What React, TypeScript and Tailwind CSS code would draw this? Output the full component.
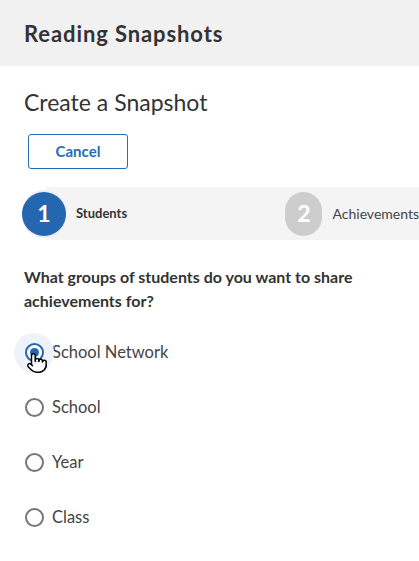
import { Pointer } from 'lucide-react';

const options = ['School Network', 'School', 'Year', 'Class'];

const App = () => {
  const font = { fontFamily: 'Lato, "Noto Sans", sans-serif' };

  return (
    <div className="w-[419px] h-[561px] overflow-hidden bg-white text-[#333]" style={font}>
      {/* Page header */}
      <div className="h-[66px] bg-[#f1f1f1] px-6 flex items-center">
        <h1 className="text-[22px] font-bold tracking-[0.9px] text-[#333]">Reading Snapshots</h1>
      </div>

      <div className="pt-[22px]">
        <h2 className="px-6 text-[23px] leading-[28px] text-[#333]">Create a Snapshot</h2>

        <button className="ml-[28px] mt-[18px] w-[100px] h-[35px] rounded-[3px] border border-[#2a6cb4] text-[#2a6cb4] text-[15px] font-bold">
          Cancel
        </button>

        {/* Stepper */}
        <div className="relative mt-[18px] h-[53px]">
          <div className="absolute left-[46px] right-0 top-0 bottom-0 bg-[#f4f4f4]" />
          <div className="relative flex items-center h-full pl-[22px]">
            <div className="w-[48px] h-[48px] rounded-full bg-[#ececec] flex items-center justify-center">
              <div className="w-[44px] h-[44px] rounded-full bg-[#2566b0] text-white text-[23px] font-bold flex items-center justify-center">
                1
              </div>
            </div>
            <span className="ml-[10px] text-[13px] font-bold text-[#333]">Students</span>
            <div className="ml-[158px] w-[44px] h-[44px] rounded-full bg-[#cdcdcd] text-white text-[23px] font-bold flex items-center justify-center">
              2
            </div>
            <span className="ml-[10px] text-[14px] text-[#444] whitespace-nowrap">Achievements</span>
          </div>
        </div>

        {/* Question */}
        <p className="mt-[25px] px-6 text-[16px] leading-[24px] font-bold text-[#333] pr-10">
          What groups of students do you want to share achievements for?
        </p>

        <div className="mt-[12px] flex flex-col">
          {options.map((label, i) => (
            <label key={label} className="relative flex items-center h-[55px] pl-[24px]">
              <span className="relative w-[20px] h-[20px] flex items-center justify-center">
                {i === 0 && (
                  <span className="absolute -inset-[10px] rounded-full bg-[#eef3fa]" />
                )}
                <span
                  className={
                    i === 0
                      ? 'relative w-[19px] h-[19px] rounded-full border-2 border-[#2566b0] bg-white flex items-center justify-center'
                      : 'relative w-[19px] h-[19px] rounded-full border-2 border-[#777] bg-white'
                  }
                >
                  {i === 0 && <span className="w-[9px] h-[9px] rounded-full bg-[#2566b0]" />}
                </span>
                {i === 0 && (
                  <Pointer
                    size={22}
                    strokeWidth={1.6}
                    fill="white"
                    color="black"
                    className="absolute left-[2px] top-[9px]"
                  />
                )}
              </span>
              <span className="ml-[8px] text-[16.5px] text-[#444]">{label}</span>
            </label>
          ))}
        </div>
      </div>
    </div>
  );
};

export default App;
